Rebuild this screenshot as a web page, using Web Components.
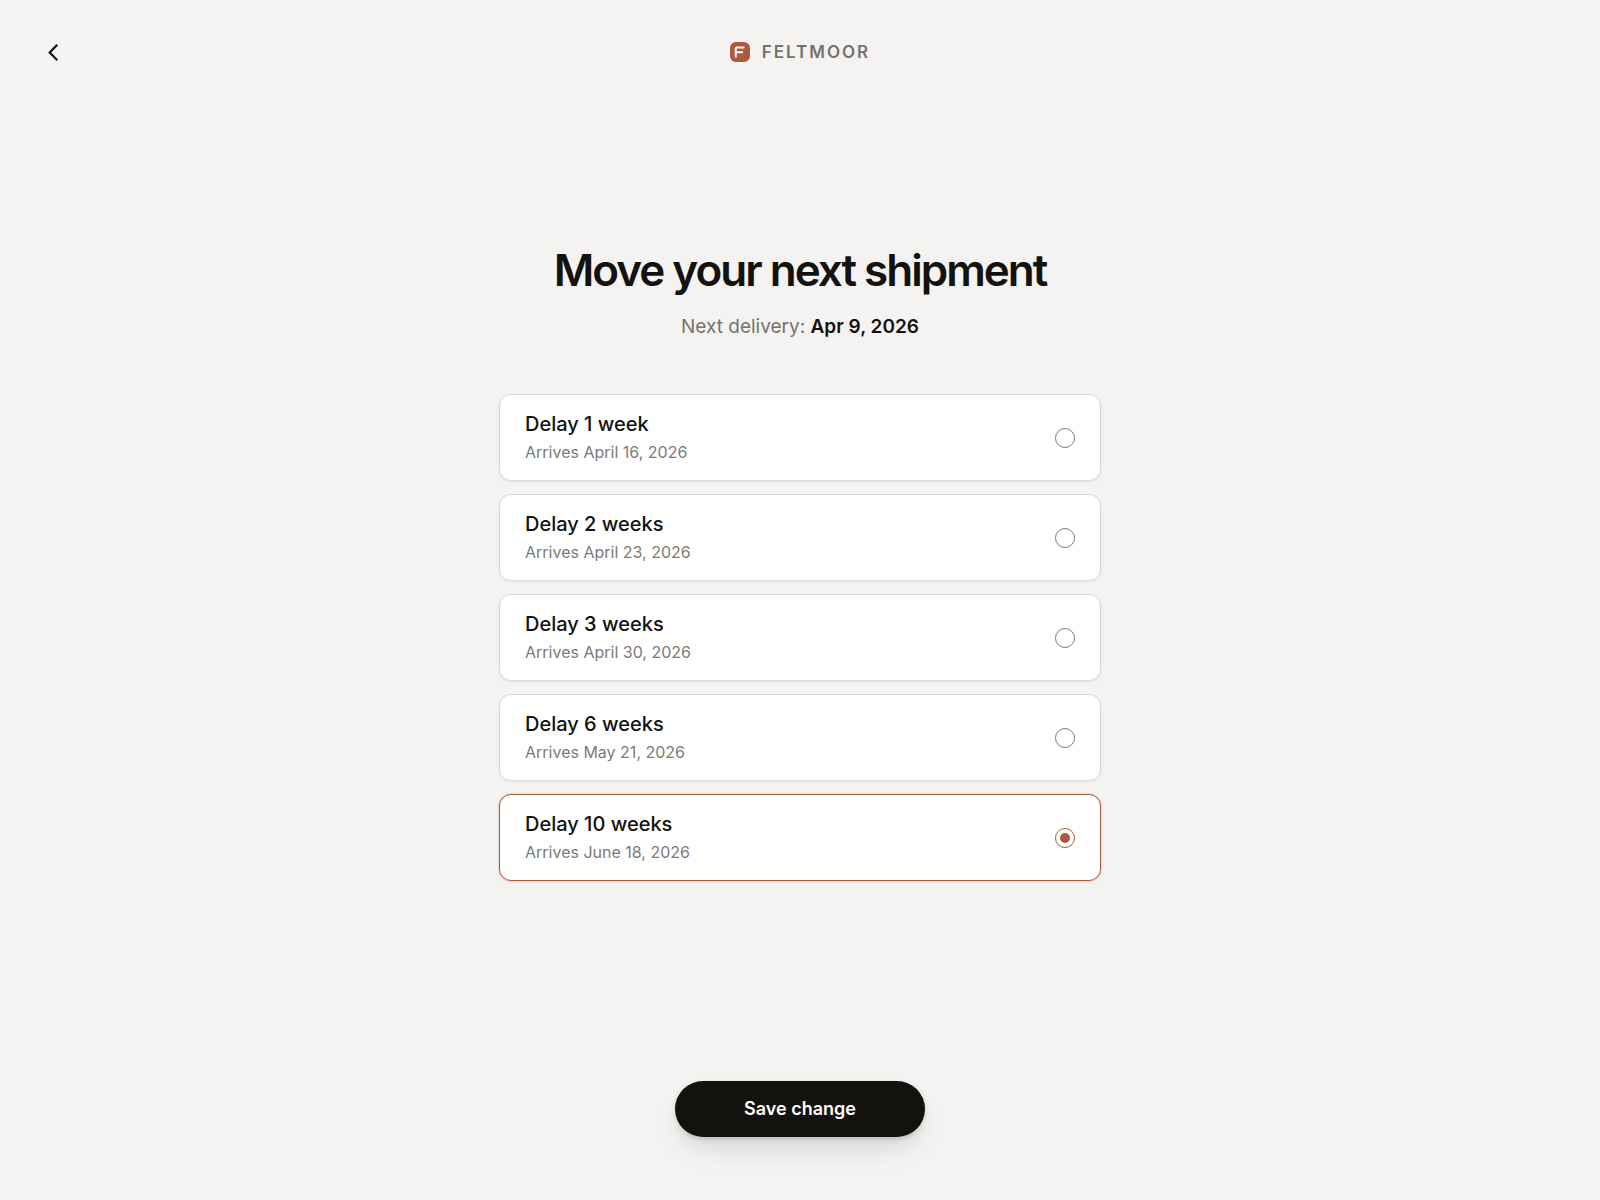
<!DOCTYPE html>
<html lang="en">
<head>
<meta charset="utf-8">
<meta name="viewport" content="width=device-width, initial-scale=1">
<title>Move your next shipment</title>
<style>
    html, body {
        height: 100%;
    }
    body {
        margin: 0;
        font-family: Inter, "Liberation Sans", sans-serif;
        --page: #f4f3f1;
        --ink: #13120f;
        --muted: #74726f;
        --accent: #ad5a3c;
        --line: #dad9d6;
        color: var(--ink);
        background: var(--page);
    }
    page-intro b {
        font-weight: 600;
        color: var(--ink);
    }
</style>
</head>
<body>
<shipment-page>
    <top-bar slot="header">Feltmoor</top-bar>
    <page-intro>
        Move your next shipment
        <span slot="note">Next delivery: <b>Apr 9, 2026</b></span>
    </page-intro>
    <delay-picker></delay-picker>
    <save-button slot="footer">Save change</save-button>
</shipment-page>

<script>
// shipment-page
const shipmentPageTemplate = document.createElement("template");
shipmentPageTemplate.innerHTML = /*html*/`
    <style>
        :host {
            box-sizing: border-box;
            min-height: 100%;
            display: flex;
            flex-direction: column;
        }
        main {
            flex: 1;
            display: flex;
            flex-direction: column;
            align-items: center;
            justify-content: center;
            gap: 53px;
            padding: 32px 24px 92px;
        }
        footer {
            display: flex;
            justify-content: center;
            padding: 0 24px 63px;
        }
    </style>
    <slot name="header"></slot>
    <main><slot></slot></main>
    <footer><slot name="footer"></slot></footer>
`;

class ShipmentPage extends HTMLElement {
    constructor() {
        super();
        this.attachShadow({mode: "open"});
        this.shadowRoot.appendChild(shipmentPageTemplate.content.cloneNode(true));
    }
}
window.customElements.define("shipment-page", ShipmentPage);

// top-bar
const topBarTemplate = document.createElement("template");
topBarTemplate.innerHTML = /*html*/`
    <style>
        :host {
            display: block;
        }
        header {
            display: grid;
            grid-template-columns: 1fr auto 1fr;
            align-items: center;
            padding: 32px;
        }
        button {
            width: 40px;
            height: 40px;
            padding: 0;
            border: 0;
            border-radius: 8px;
            background: none;
            color: inherit;
            cursor: pointer;
            display: grid;
            place-items: center;
        }
        .brand {
            display: flex;
            align-items: center;
            gap: 12px;
            color: var(--muted);
            font-size: 17px;
            line-height: 24px;
            font-weight: 600;
            letter-spacing: 2px;
            text-transform: uppercase;
        }
        svg {
            display: block;
        }
    </style>
    <header>
        <button type="button" aria-label="Back">
            <svg width="24" height="24" viewBox="0 0 24 24" fill="none" stroke="currentColor" stroke-width="2.200">
                <path d="M17.300 4.700L9.700 12.500l7.600 7.800"/>
            </svg>
        </button>
        <div class="brand">
            <svg width="20" height="20" viewBox="0 0 20 20" aria-hidden="true">
                <rect width="20" height="20" rx="6" fill="#ad5a3c"/>
                <path d="M14.500 5.500H7q-1.300 0-1.300 1.300V15.500M5.700 10.300h7.300" fill="none" stroke="#fff" stroke-width="2"/>
            </svg>
            <slot></slot>
        </div>
    </header>
`;

class TopBar extends HTMLElement {
    constructor() {
        super();
        this.attachShadow({mode: "open"});
        this.shadowRoot.appendChild(topBarTemplate.content.cloneNode(true));
    }
}
window.customElements.define("top-bar", TopBar);

// page-intro
const pageIntroTemplate = document.createElement("template");
pageIntroTemplate.innerHTML = /*html*/`
    <style>
        :host {
            display: block;
            text-align: center;
        }
        h1 {
            margin: 0 0 17px;
            font-size: 44px;
            line-height: 52px;
            font-weight: 600;
            letter-spacing: -2px;
        }
        p {
            margin: 0;
            font-size: 19px;
            line-height: 28px;
            color: var(--muted);
        }
    </style>
    <h1><slot></slot></h1>
    <p><slot name="note"></slot></p>
`;

class PageIntro extends HTMLElement {
    constructor() {
        super();
        this.attachShadow({mode: "open"});
        this.shadowRoot.appendChild(pageIntroTemplate.content.cloneNode(true));
    }
}
window.customElements.define("page-intro", PageIntro);

// delay-text
const delayTextTemplate = document.createElement("template");
delayTextTemplate.innerHTML = /*html*/`
    <style>
        :host {
            display: flex;
            flex-direction: column;
            font-size: 20px;
            line-height: 28px;
            font-weight: 500;
        }
        small {
            font-size: 16px;
            font-weight: 400;
            color: #7c7a78;
        }
    </style>
    <span><slot></slot></span>
    <small><slot name="arrival"></slot></small>
`;

class DelayText extends HTMLElement {
    constructor() {
        super();
        this.attachShadow({mode: "open"});
        this.shadowRoot.appendChild(delayTextTemplate.content.cloneNode(true));
    }
}
window.customElements.define("delay-text", DelayText);

// delay-picker
const delays = [
    {weeks: 1, label: "Delay 1 week", date: "April 16, 2026"},
    {weeks: 2, label: "Delay 2 weeks", date: "April 23, 2026"},
    {weeks: 3, label: "Delay 3 weeks", date: "April 30, 2026"},
    {weeks: 6, label: "Delay 6 weeks", date: "May 21, 2026"},
    {weeks: 10, label: "Delay 10 weeks", date: "June 18, 2026", checked: true}
];

// all radios share this one root, so the browser groups them by name
class DelayPicker extends HTMLElement {
    constructor() {
        super();
        this.attachShadow({mode: "open"});
        this.shadowRoot.innerHTML = /*html*/`
            <style>
                :host {
                    display: block;
                    width: 100%;
                    max-width: 602px;
                }
                fieldset {
                    margin: 0;
                    padding: 0;
                    border: 0;
                    min-width: 0;
                    display: flex;
                    flex-direction: column;
                    gap: 13px;
                }
                label {
                    display: flex;
                    align-items: center;
                    justify-content: space-between;
                    padding: 15px 25px 14px;
                    border: 1px solid var(--line);
                    border-radius: 12px;
                    background: #fff;
                    box-shadow: 0 1px 3px rgba(0, 0, 0, 0.08);
                    cursor: pointer;
                }
                label:has(input:checked) {
                    border-color: var(--accent);
                    box-shadow: 0 0 2px rgba(173, 90, 60, 0.5);
                }
                input {
                    appearance: none;
                    box-sizing: border-box;
                    flex: none;
                    width: 20px;
                    height: 20px;
                    margin: 0;
                    border: 1px solid #7c7a78;
                    border-radius: 50%;
                    cursor: pointer;
                }
                input:checked {
                    border-color: var(--accent);
                    padding: 4px;
                    background: var(--accent) content-box;
                }
            </style>
            <fieldset aria-label="Delay">
                ${delays.map((d) => `
                    <label for="delay-${d.weeks}">
                        <delay-text>${d.label}<span slot="arrival">Arrives ${d.date}</span></delay-text>
                        <input type="radio" name="delay" id="delay-${d.weeks}" value="${d.weeks}" ${d.checked ? "checked" : ""}>
                    </label>
                `).join("")}
            </fieldset>
        `;
    }
}
window.customElements.define("delay-picker", DelayPicker);

// save-button
const saveButtonTemplate = document.createElement("template");
saveButtonTemplate.innerHTML = /*html*/`
    <style>
        :host {
            display: block;
        }
        button {
            min-width: 250px;
            padding: 14px 32px;
            border: 0;
            border-radius: 28px;
            background: var(--ink);
            color: #fff;
            font: 600 18px/28px Inter, "Liberation Sans", sans-serif;
            box-shadow: 0 2px 5px rgba(0, 0, 0, 0.16), 0 16px 28px -8px rgba(0, 0, 0, 0.14);
            cursor: pointer;
        }
    </style>
    <button type="button"><slot></slot></button>
`;

class SaveButton extends HTMLElement {
    constructor() {
        super();
        this.attachShadow({mode: "open"});
        this.shadowRoot.appendChild(saveButtonTemplate.content.cloneNode(true));
    }
}
window.customElements.define("save-button", SaveButton);
</script>
</body>
</html>
